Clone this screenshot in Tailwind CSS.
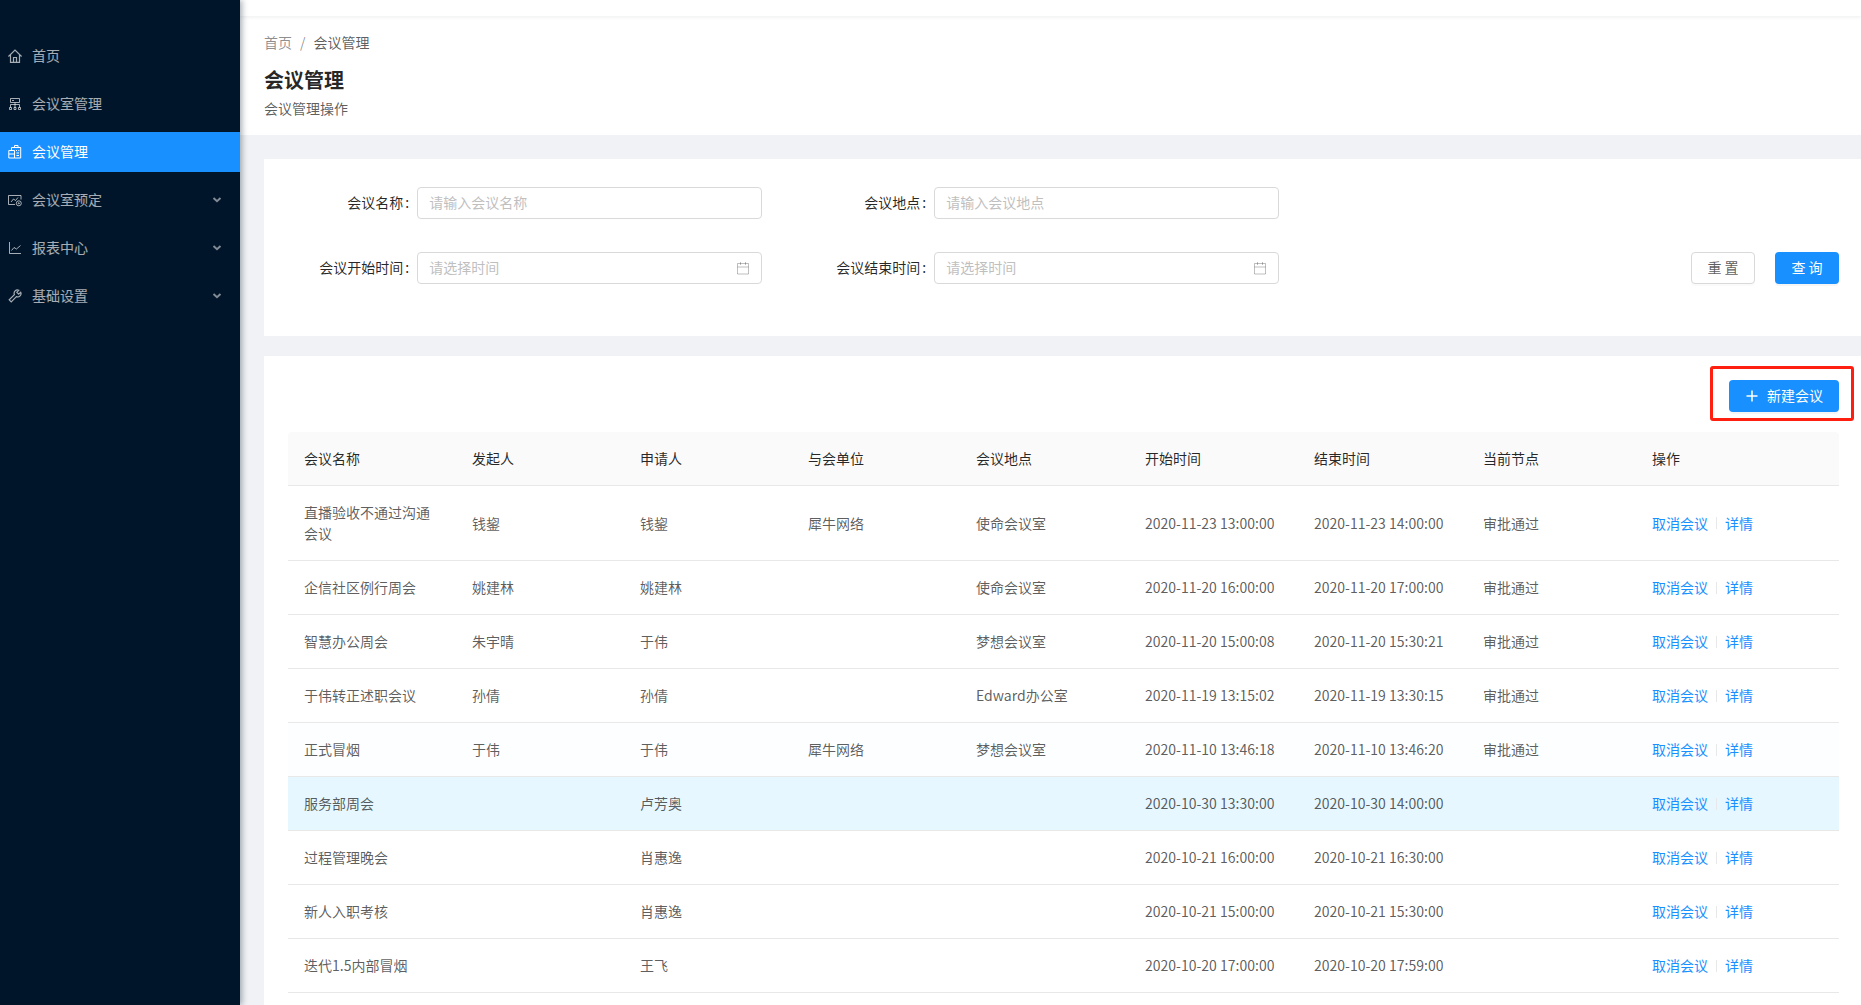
<!doctype html>
<html lang="zh-CN">

<head>
    <meta charset="utf-8">
    <meta name="viewport" content="width=device-width, initial-scale=1">
    <title>会议管理</title>
    <script src="https://cdn.jsdelivr.net/npm/@tailwindcss/browser@4"></script>
    <style>
        body { font-family: "Noto Sans CJK SC", "Microsoft YaHei", sans-serif; }
    </style>
</head>

<body class="h-screen overflow-hidden bg-[#f0f2f5] text-sm text-black/65">
    <div class="flex h-full">
        <aside class="relative z-10 w-60 shrink-0 bg-[#001529] pt-9 shadow-[2px_0_6px_rgba(0,21,41,0.35)]">
            <nav class="flex flex-col gap-2 text-white/65">
                <a href="#" class="flex h-10 items-center gap-[10px] px-2">
                    <svg class="size-[14px]" viewBox="0 0 14 14" fill="none" stroke="currentColor" stroke-width="1.200"><path d="M.4 7.500 7 1l6.600 6.500M2.500 6v7.400h9V6M5.500 13V8.500h3V13" /></svg>
                    <span class="pb-0.5">首页</span>
                </a>
                <a href="#" class="flex h-10 items-center gap-[10px] px-2">
                    <svg class="size-[14px]" viewBox="0 0 14 14" fill="none" stroke="currentColor"><path d="M2.500 1.500h9v4h-9zM4 3.500h2M7 5.500v5M2.500 10.500v-3h9v3M1.500 10.500h2v2h-2zM6 10.500h2v2H6zM10.500 10.500h2v2h-2z" /></svg>
                    <span class="pb-0.5">会议室管理</span>
                </a>
                <a href="#" class="flex h-10 items-center gap-[10px] bg-[#1890ff] px-2 text-white">
                    <svg class="size-[14px]" viewBox="0 0 14 14" fill="none" stroke="currentColor"><path d="M.8 5.500h5.700v7.500H.8zM.8 9h5.700M3.500 5.500V3M3.500 5V2.500h9.200V13H6.500M6.500 2.500v-2h3.500v2M8 5.500h1M10.300 5.500h1M8.500 8h2.500M8.500 10.500h2.500" /></svg>
                    <span class="pb-0.5">会议管理</span>
                </a>
                <a href="#" class="flex h-10 items-center gap-[10px] pr-4 pl-2">
                    <svg class="size-[14px]" viewBox="0 0 14 14" fill="none" stroke="currentColor"><path d="M7 11.500H.5v-9h12.500v4M3 9l2.500-3 2 1.500L10 4.500" /><circle cx="10.800" cy="10.300" r="2.500" /><circle cx="10.800" cy="10.300" r=".6" /></svg>
                    <span class="flex-1 pb-0.5">会议室预定</span>
                    <svg class="size-[14px] text-white/50" viewBox="0 0 14 14" fill="none" stroke="currentColor" stroke-width="2"><path d="M3.500 5 7 8.200 10.500 5" /></svg>
                </a>
                <a href="#" class="flex h-10 items-center gap-[10px] pr-4 pl-2">
                    <svg class="size-[14px]" viewBox="0 0 14 14" fill="none" stroke="currentColor"><path d="M1.500 1v11.500H13M3.500 9.500 6 6.500 8.500 8l4-3.500" /></svg>
                    <span class="flex-1 pb-0.5">报表中心</span>
                    <svg class="size-[14px] text-white/50" viewBox="0 0 14 14" fill="none" stroke="currentColor" stroke-width="2"><path d="M3.500 5 7 8.200 10.500 5" /></svg>
                </a>
                <a href="#" class="flex h-10 items-center gap-[10px] pr-4 pl-2">
                    <svg class="size-[14px]" viewBox="0 0 14 14" fill="none" stroke="currentColor" stroke-width="1.200"><path d="M10.800 1.300a3.300 3.300 0 0 0-4.400 4.300L1.200 10.800l2 2L8.400 7.600a3.300 3.300 0 0 0 4.300-4.400l-2 2-1.900-1.900z" /></svg>
                    <span class="flex-1 pb-0.5">基础设置</span>
                    <svg class="size-[14px] text-white/50" viewBox="0 0 14 14" fill="none" stroke="currentColor" stroke-width="2"><path d="M3.500 5 7 8.200 10.500 5" /></svg>
                </a>
            </nav>
        </aside>

        <main class="flex min-w-0 flex-1 flex-col">
            <div class="relative h-4 shrink-0 bg-white shadow-[0_1px_4px_rgba(0,21,41,0.08)]"></div>

            <header class="h-[119px] shrink-0 bg-white px-6 pt-[15px]">
                <div class="flex gap-2 leading-[22px]">
                    <a href="#" class="text-black/45">首页</a>
                    <span class="text-black/45">/</span>
                    <span>会议管理</span>
                </div>
                <h1 class="mt-[11px] text-xl leading-8 font-bold text-black/85">会议管理</h1>
                <p class="mt-px leading-[22px]">会议管理操作</p>
            </header>

            <section class="mt-6 ml-6 shrink-0 bg-white pt-7 pr-[22px] pb-[52px] pl-6">
                <form class="grid grid-cols-3 gap-y-[33px]">
                    <div class="flex h-8 items-center">
                        <label for="name" class="w-1/4 pr-2 pb-0.5 text-right text-black/85">会议名称<span class="ml-0.5">:</span></label>
                        <input id="name" type="text" placeholder="请输入会议名称" class="h-8 w-2/3 rounded border border-[#d9d9d9] px-[11px] pb-0.5 placeholder:text-[#bfbfbf]">
                    </div>
                    <div class="flex h-8 items-center">
                        <label for="place" class="w-1/4 pr-2 pb-0.5 text-right text-black/85">会议地点<span class="ml-0.5">:</span></label>
                        <input id="place" type="text" placeholder="请输入会议地点" class="h-8 w-2/3 rounded border border-[#d9d9d9] px-[11px] pb-0.5 placeholder:text-[#bfbfbf]">
                    </div>
                    <div></div>
                    <div class="flex h-8 items-center">
                        <label for="start" class="w-1/4 pr-2 pb-0.5 text-right text-black/85">会议开始时间<span class="ml-0.5">:</span></label>
                        <div class="flex h-8 w-2/3 items-center rounded border border-[#d9d9d9] px-[11px]">
                            <input id="start" type="text" placeholder="请选择时间" class="min-w-0 flex-1 pb-0.5 placeholder:text-[#bfbfbf]">
                            <svg class="size-[14px] text-black/25" viewBox="0 0 14 14" fill="none" stroke="currentColor"><path d="M1.500 2.500h11v10.500h-11zM1.500 6h11M4.500 1v3M9.500 1v3" /></svg>
                        </div>
                    </div>
                    <div class="flex h-8 items-center">
                        <label for="end" class="w-1/4 pr-2 pb-0.5 text-right text-black/85">会议结束时间<span class="ml-0.5">:</span></label>
                        <div class="flex h-8 w-2/3 items-center rounded border border-[#d9d9d9] px-[11px]">
                            <input id="end" type="text" placeholder="请选择时间" class="min-w-0 flex-1 pb-0.5 placeholder:text-[#bfbfbf]">
                            <svg class="size-[14px] text-black/25" viewBox="0 0 14 14" fill="none" stroke="currentColor"><path d="M1.500 2.500h11v10.500h-11zM1.500 6h11M4.500 1v3M9.500 1v3" /></svg>
                        </div>
                    </div>
                    <div class="flex justify-end gap-5">
                        <button type="reset" class="h-8 w-16 rounded border border-[#d9d9d9] bg-white pb-0.5 shadow-[0_2px_0_rgba(0,0,0,0.02)]">重 置</button>
                        <button type="submit" class="h-8 w-16 rounded bg-[#1890ff] pb-0.5 text-white shadow-[0_2px_0_rgba(0,0,0,0.04)]">查 询</button>
                    </div>
                </form>
            </section>

            <section class="mt-5 ml-6 flex-1 bg-white pt-6 pr-[22px] pl-6">
                <div class="mb-5 flex justify-end">
                    <div class="relative">
                        <button type="button" class="flex h-8 w-[110px] items-center justify-center gap-2 rounded bg-[#1890ff] text-white shadow-[0_2px_0_rgba(0,0,0,0.04)]">
                            <svg class="size-[14px]" viewBox="0 0 14 14" fill="none" stroke="currentColor" stroke-width="1.500"><path d="M7 1.500v11M1.500 7h11" /></svg>
                            <span class="pb-0.5">新建会议</span>
                        </button>
                        <div class="pointer-events-none absolute -top-[14px] -right-[15px] -bottom-[9px] -left-[19px] rounded-[3px] border-3 border-[#ff1f10]"></div>
                    </div>
                </div>

                <table class="w-full table-fixed border-separate border-spacing-0 text-left leading-[21px]">
                    <thead class="text-black/85">
                        <tr class="*:border-b *:border-[#e8e8e8] *:bg-[#fafafa] *:p-4 *:font-normal">
                            <th class="w-[168px] rounded-tl">会议名称</th>
                            <th class="w-[168px]">发起人</th>
                            <th class="w-[168px]">申请人</th>
                            <th class="w-[168px]">与会单位</th>
                            <th>会议地点</th>
                            <th>开始时间</th>
                            <th>结束时间</th>
                            <th>当前节点</th>
                            <th class="w-[203px] rounded-tr">操作</th>
                        </tr>
                    </thead>
                    <tbody id="meetings"></tbody>
                </table>
            </section>
        </main>
    </div>

    <script>
        const meetings = [
            ['直播验收不通过沟通会议', '钱鋆', '钱鋆', '犀牛网络', '使命会议室', '2020-11-23 13:00:00', '2020-11-23 14:00:00', '审批通过'],
            ['企信社区例行周会', '姚建林', '姚建林', '', '使命会议室', '2020-11-20 16:00:00', '2020-11-20 17:00:00', '审批通过'],
            ['智慧办公周会', '朱宇晴', '于伟', '', '梦想会议室', '2020-11-20 15:00:08', '2020-11-20 15:30:21', '审批通过'],
            ['于伟转正述职会议', '孙倩', '孙倩', '', 'Edward办公室', '2020-11-19 13:15:02', '2020-11-19 13:30:15', '审批通过'],
            ['正式冒烟', '于伟', '于伟', '犀牛网络', '梦想会议室', '2020-11-10 13:46:18', '2020-11-10 13:46:20', '审批通过'],
            ['服务部周会', '', '卢芳奥', '', '', '2020-10-30 13:30:00', '2020-10-30 14:00:00', ''],
            ['过程管理晚会', '', '肖惠逸', '', '', '2020-10-21 16:00:00', '2020-10-21 16:30:00', ''],
            ['新人入职考核', '', '肖惠逸', '', '', '2020-10-21 15:00:00', '2020-10-21 15:30:00', ''],
            ['迭代1.5内部冒烟', '', '王飞', '', '', '2020-10-20 17:00:00', '2020-10-20 17:59:00', ''],
        ];
        const rowColors = { 4: 'bg-[#fcfeff]', 5: 'bg-[#e6f7ff]' };

        document.getElementById('meetings').innerHTML = meetings.map((row, i) => `
            <tr class="*:border-b *:border-[#e8e8e8] *:p-4 ${rowColors[i] || ''}">
                ${row.map(text => `<td>${text}</td>`).join('')}
                <td>
                    <div class="flex items-center text-[#1890ff]">
                        <a href="#">取消会议</a>
                        <span class="mx-2 h-3 w-px bg-[#e8e8e8]"></span>
                        <a href="#">详情</a>
                    </div>
                </td>
            </tr>`).join('');
    </script>
</body>

</html>
